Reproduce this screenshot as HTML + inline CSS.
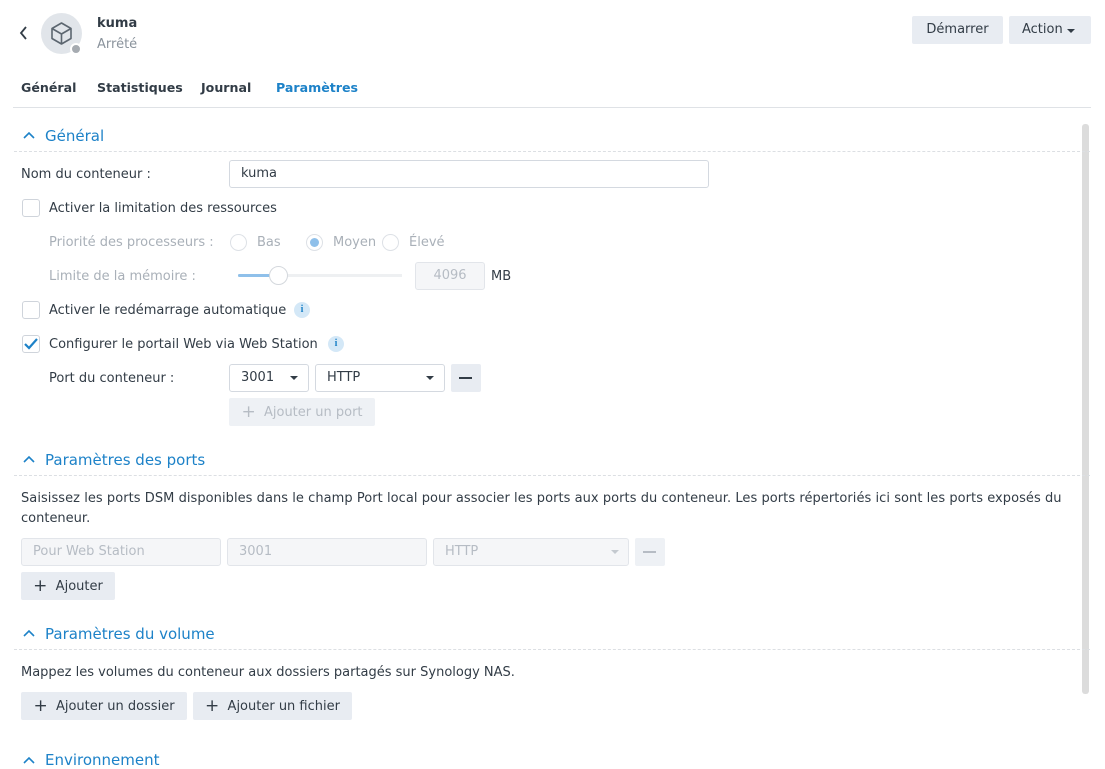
<!DOCTYPE html>
<html><head><meta charset="utf-8"><style>
*{box-sizing:border-box;margin:0;padding:0}
body{width:1105px;height:759px;overflow:hidden;background:#fff;font-family:"DejaVu Sans","Liberation Sans",sans-serif;font-size:13px;color:#323c46;position:relative}
.a{position:absolute;white-space:nowrap}
.btn{position:absolute;background:#e8ecf2;border-radius:2px;height:28px;line-height:28px;text-align:center;color:#323c46}
.inp{position:absolute;border:1px solid #d4d9e0;border-radius:3px;height:28px;line-height:26px;padding-left:11px;background:#fff}
.dis{background:#f5f6f8;color:#b6bcc4;border-color:#e2e5ea}
.cb{position:absolute;width:18px;height:18px;border:1px solid #cfd4db;border-radius:3px;background:#fff}
.sec{position:absolute;left:45px;color:#1d82c8;font-size:15px}
.chev{position:absolute;left:23px}
.dash{position:absolute;left:14px;width:1076px;border-top:1px dashed #dcdfe3}
.grey{color:#a9b0b8}
.radio{position:absolute;width:17px;height:17px;border:1px solid #dde1e6;border-radius:50%;background:#fff}
.info{position:absolute;width:16px;height:16px;border-radius:50%;background:#d4e8f7;color:#1d82c8;font-size:10px;font-weight:bold;text-align:center;line-height:16px;font-family:"Liberation Serif",serif}
.caret{position:absolute;width:0;height:0;border-left:4px solid transparent;border-right:4px solid transparent;border-top:4px solid #323c46}
</style></head><body>
<svg class="a" style="left:18px;top:25px" width="12" height="16"><path d="M8 2 L3 8 L8 14" fill="none" stroke="#323c46" stroke-width="1.8"/></svg>
<div class="a" style="left:41px;top:13px;width:41px;height:41px;border-radius:50%;background:#e1e5ea"></div>
<svg class="a" style="left:48px;top:20px" width="27" height="27" viewBox="0 0 27 27"><path d="M13.5 3 L23 8.5 V18.5 L13.5 24 L4 18.5 V8.5 Z M4 8.5 L13.5 14 L23 8.5 M13.5 14 V24" fill="none" stroke="#5c6670" stroke-width="1.6" stroke-linejoin="round"/></svg>
<div class="a" style="left:70px;top:43px;width:12px;height:12px;border-radius:50%;background:#a6abb1;border:2px solid #fff"></div>
<div class="a" style="left:97px;top:16px;font-weight:bold;font-size:13px">kuma</div>
<div class="a" style="left:97px;top:37px;color:#8a939c">Arrêté</div>
<div class="btn" style="left:912px;top:16px;width:91px">Démarrer</div>
<div class="btn" style="left:1009px;top:16px;width:82px;text-align:left;padding-left:13px">Action</div>
<div class="caret" style="left:1067px;top:29px;border-top-color:#323c46"></div>
<div class="a" style="left:21px;top:80px;font-weight:bold;font-size:12.6px">Général</div>
<div class="a" style="left:97px;top:80px;font-weight:bold;font-size:12.6px">Statistiques</div>
<div class="a" style="left:201px;top:80px;font-weight:bold;font-size:12.6px">Journal</div>
<div class="a" style="left:276px;top:80px;font-weight:bold;color:#1d82c8;font-size:12.6px">Paramètres</div>
<div class="a" style="left:13px;top:107px;width:1078px;border-top:1px solid #dfe2e6"></div>
<div class="a" style="left:1082px;top:124px;width:7px;height:570px;background:#dcdcdc;border-radius:3px"></div>

<svg class="chev" style="top:131px" width="12" height="8"><path d="M1 7 L6 2 L11 7" fill="none" stroke="#1d82c8" stroke-width="1.6"/></svg>
<div class="sec" style="top:127px">Général</div>
<div class="dash" style="top:151px"></div>
<div class="a" style="left:21px;top:167px">Nom du conteneur :</div>
<div class="inp" style="left:229px;top:160px;width:480px">kuma</div>
<div class="cb" style="left:22px;top:199px"></div>
<div class="a" style="left:49px;top:201px">Activer la limitation des ressources</div>
<div class="a grey" style="left:49px;top:235px">Priorité des processeurs :</div>
<div class="radio" style="left:230px;top:234px"></div><div class="a grey" style="left:257px;top:235px">Bas</div>
<div class="radio" style="left:306px;top:234px"></div><div class="a" style="left:310px;top:238px;width:9px;height:9px;border-radius:50%;background:#8fc0ea"></div><div class="a grey" style="left:333px;top:235px">Moyen</div>
<div class="radio" style="left:382px;top:234px"></div><div class="a grey" style="left:409px;top:235px">Élevé</div>
<div class="a grey" style="left:49px;top:269px">Limite de la mémoire :</div>
<div class="a" style="left:238px;top:274px;width:164px;height:3px;background:#eef0f2"></div>
<div class="a" style="left:238px;top:274px;width:40px;height:3px;background:#8fc0ea;border-radius:2px"></div>
<div class="a" style="left:269px;top:266px;width:19px;height:19px;border-radius:50%;background:#fff;border:1px solid #d4d8dd"></div>
<div class="inp dis" style="left:415px;top:262px;width:70px;text-align:center;padding:0">4096</div>
<div class="a" style="left:491px;top:269px">MB</div>
<div class="cb" style="left:22px;top:301px"></div>
<div class="a" style="left:49px;top:303px">Activer le redémarrage automatique</div>
<div class="info" style="left:294px;top:302px">i</div>
<div class="cb" style="left:22px;top:335px"></div>
<svg class="a" style="left:23px;top:336px" width="16" height="16"><path d="M2 8 L6 12 L14 3" fill="none" stroke="#1d82c8" stroke-width="2.2"/></svg>
<div class="a" style="left:49px;top:337px">Configurer le portail Web via Web Station</div>
<div class="info" style="left:328px;top:336px">i</div>
<div class="a" style="left:49px;top:371px">Port du conteneur :</div>
<div class="inp" style="left:229px;top:364px;width:80px">3001</div><div class="caret" style="left:290px;top:376px"></div>
<div class="inp" style="left:315px;top:364px;width:130px">HTTP</div><div class="caret" style="left:426px;top:376px"></div>
<div class="btn" style="left:451px;top:364px;width:30px"></div><div class="a" style="left:459px;top:377px;width:13px;height:2px;background:#323c46"></div>
<div class="btn" style="left:229px;top:398px;width:146px;color:#b6bcc4;background:#eef1f5"><span style="font-size:17px;vertical-align:-1px">+</span>&nbsp; Ajouter un port</div>

<svg class="chev" style="top:455px" width="12" height="8"><path d="M1 7 L6 2 L11 7" fill="none" stroke="#1d82c8" stroke-width="1.6"/></svg>
<div class="sec" style="top:451px">Paramètres des ports</div>
<div class="dash" style="top:475px"></div>
<div class="a" style="left:21px;top:491px;font-size:13px;letter-spacing:0.05px">Saisissez les ports DSM disponibles dans le champ Port local pour associer les ports aux ports du conteneur. Les ports répertoriés ici sont les ports exposés du</div>
<div class="a" style="left:21px;top:511px">conteneur.</div>
<div class="inp dis" style="left:21px;top:538px;width:200px">Pour Web Station</div>
<div class="inp dis" style="left:227px;top:538px;width:200px">3001</div>
<div class="inp dis" style="left:433px;top:538px;width:196px">HTTP</div><div class="caret" style="left:611px;top:550px;border-top-color:#c4c9cf"></div>
<div class="btn" style="left:635px;top:538px;width:30px;background:#eef1f5"></div><div class="a" style="left:643px;top:551px;width:13px;height:2px;background:#b6bcc4"></div>
<div class="btn" style="left:21px;top:572px;width:94px"><span style="font-size:17px;vertical-align:-1px">+</span>&nbsp; Ajouter</div>

<svg class="chev" style="top:629px" width="12" height="8"><path d="M1 7 L6 2 L11 7" fill="none" stroke="#1d82c8" stroke-width="1.6"/></svg>
<div class="sec" style="top:625px">Paramètres du volume</div>
<div class="dash" style="top:649px"></div>
<div class="a" style="left:21px;top:665px">Mappez les volumes du conteneur aux dossiers partagés sur Synology NAS.</div>
<div class="btn" style="left:21px;top:692px;width:166px"><span style="font-size:17px;vertical-align:-1px">+</span>&nbsp; Ajouter un dossier</div>
<div class="btn" style="left:193px;top:692px;width:159px"><span style="font-size:17px;vertical-align:-1px">+</span>&nbsp; Ajouter un fichier</div>
<svg class="chev" style="top:756px" width="12" height="8"><path d="M1 7 L6 2 L11 7" fill="none" stroke="#1d82c8" stroke-width="1.6"/></svg>
<div class="sec" style="top:751px">Environnement</div>
</body></html>
